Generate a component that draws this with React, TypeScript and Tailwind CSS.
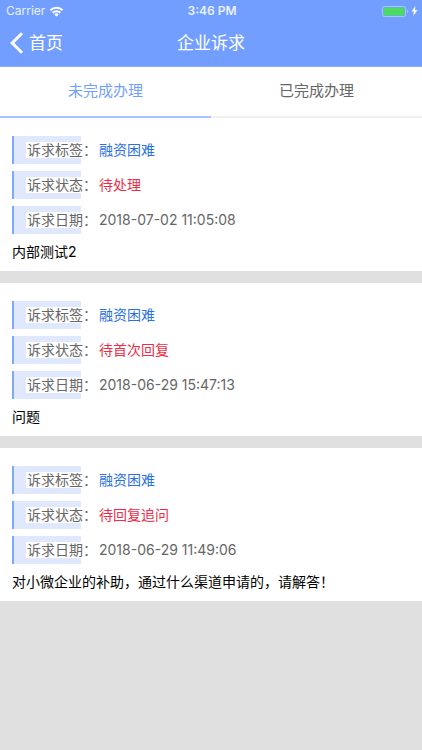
import React, { useState } from 'react';

const appeals = [
  { id: 1, tag: '融资困难', status: '待处理', date: '2018-07-02 11:05:08', content: '内部测试2' },
  { id: 2, tag: '融资困难', status: '待首次回复', date: '2018-06-29 15:47:13', content: '问题' },
  {
    id: 3,
    tag: '融资困难',
    status: '待回复追问',
    date: '2018-06-29 11:49:06',
    content: '对小微企业的补助，通过什么渠道申请的，请解答！',
  },
];

const tabs = ['未完成办理', '已完成办理'];

function StatusBar() {
  return (
    <div className="grid h-5 grid-cols-3 items-center pt-0.5 pl-1.5 pr-1 text-xs text-[#e9f0ff]">
      <div className="flex items-center gap-1">
        <span>Carrier</span>
        <svg width="15" height="11" viewBox="0 0 14 11" fill="none" stroke="#fff" strokeWidth="2">
          <path d="M0.9 4.2a8.7 8.7 0 0 1 12.2 0" />
          <path d="M3.2 6.7a5.4 5.4 0 0 1 7.6 0" />
          <path d="M7 10.6 4.8 8.4a3.1 3.1 0 0 1 4.4 0z" fill="#fff" stroke="none" />
        </svg>
      </div>
      <div className="text-center font-semibold">3:46 PM</div>
      <div className="flex items-center justify-end gap-0.5">
        <svg width="27" height="11" viewBox="0 0 27 11">
          <rect x="0.5" y="0.5" width="23" height="10" rx="2" fill="none" stroke="#a9c5ff" />
          <rect x="1.5" y="1.5" width="21" height="8" rx="1" fill="#4cd964" />
          <path d="M25 3.5v4c1.6-.5 1.6-3.5 0-4z" fill="#a9c5ff" />
        </svg>
        <svg width="7" height="10" viewBox="0 0 7 10" fill="#fff">
          <path d="M4.4 0 0.5 5.6h2.4L2.2 10l4.3-5.9H4z" />
        </svg>
      </div>
    </div>
  );
}

function Row({ label, value, color }: { label: string; value: string; color: string }) {
  return (
    <div className="flex h-7 items-center gap-[18px]">
      <dt className="flex h-full w-[69px] items-center whitespace-nowrap border-l-2 border-[#80a8fa] bg-[#dfe8fd] pl-3 text-[#666]">
        <span className="h-4 bg-white pl-px leading-4">{label}：</span>
      </dt>
      <dd className={color}>{value}</dd>
    </div>
  );
}

export default function App() {
  const [active, setActive] = useState(0);

  return (
    <div className="min-h-screen bg-[#e0e0e0] font-['Inter','Noto_Sans_CJK_SC',sans-serif] text-sm">
      <header className="bg-[#729fff] text-white">
        <StatusBar />
        <div className="grid h-[47px] grid-cols-[1fr_auto_1fr] items-center border-b border-[#8fb0f5] px-2.5 text-[17px]">
          <a href="#home" className="flex items-center gap-1.5">
            <svg width="13" height="22" viewBox="0 0 13 22" fill="none" stroke="#fff" strokeWidth="3">
              <path d="M12 1.2 2.2 11 12 20.8" />
            </svg>
            首页
          </a>
          <h1>企业诉求</h1>
        </div>
      </header>

      <nav className="flex bg-white text-[15px]">
        {tabs.map((tab, i) => (
          <button
            key={tab}
            type="button"
            onClick={() => setActive(i)}
            className={
              i === active
                ? 'h-[51px] flex-1 border-b-2 border-[#a6c2ff] pb-0.5 text-[#729fff]'
                : 'h-[51px] flex-1 border-b-2 border-[#f0f0f0] pb-0.5 text-[#666]'
            }
          >
            {tab}
          </button>
        ))}
      </nav>

      <main className="flex flex-col gap-3">
        {appeals.map((item) => (
          <article key={item.id} className="bg-white px-3 pt-[18px]">
            <dl className="flex flex-col gap-[7px]">
              <Row label="诉求标签" value={item.tag} color="text-[#2a6fe8]" />
              <Row label="诉求状态" value={item.status} color="text-[#ee2c48]" />
              <Row label="诉求日期" value={item.date} color="text-[#666]" />
            </dl>
            <p className="pb-px leading-9 text-black">{item.content}</p>
          </article>
        ))}
      </main>
    </div>
  );
}
